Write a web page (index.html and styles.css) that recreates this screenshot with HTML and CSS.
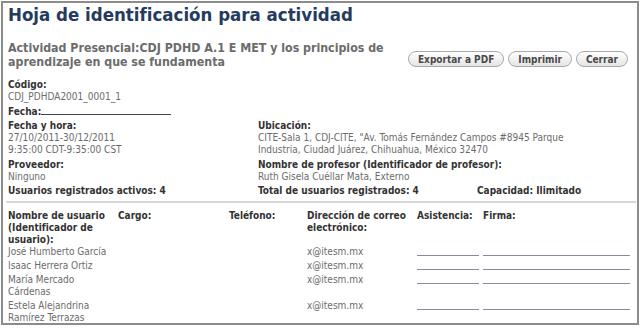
FILE: index.html
```html
<!DOCTYPE html>
<html lang="es">
<head>
<meta charset="utf-8">
<title>Hoja de identificación para actividad</title>
<link rel="stylesheet" href="styles.css">
</head>
<body>
<div class="frame">
  <h1 class="title">Hoja de identificación para actividad</h1>
  <div class="head">
    <div class="subtitle">Actividad Presencial:CDJ PDHD A.1 E MET y los principios de aprendizaje en que se fundamenta</div>
    <div class="buttons">
      <button class="btn">Exportar a PDF</button>
      <button class="btn">Imprimir</button>
      <button class="btn">Cerrar</button>
    </div>
  </div>
  <div class="info">
    <div class="field"><div class="lbl">Código:</div><div class="val">CDJ_PDHDA2001_0001_1</div></div>
    <div class="field"><div class="lbl">Fecha:<span class="blank"></span></div></div>
    <div class="pair">
      <div class="field"><div class="lbl">Fecha y hora:</div><div class="val">27/10/2011-30/12/2011<br>9:35:00 CDT-9:35:00 CST</div></div>
      <div class="field"><div class="lbl">Ubicación:</div><div class="val">CITE-Sala 1, CDJ-CITE, "Av. Tomás Fernández Campos #8945 Parque Industria, Ciudad Juárez, Chihuahua, México 32470</div></div>
    </div>
    <div class="pair">
      <div class="field"><div class="lbl">Proveedor:</div><div class="val">Ninguno</div></div>
      <div class="field"><div class="lbl">Nombre de profesor (Identificador de profesor):</div><div class="val">Ruth Gisela Cuéllar Mata, Externo</div></div>
    </div>
    <div class="counts">
      <div class="lbl">Usuarios registrados activos: 4</div>
      <div class="lbl">Total de usuarios registrados: 4</div>
      <div class="lbl">Capacidad: Ilimitado</div>
    </div>
  </div>
  <div class="sep"></div>
  <table class="users">
    <colgroup>
      <col class="c-name"><col class="c-cargo"><col class="c-tel"><col class="c-mail"><col class="c-asis"><col class="c-firma">
    </colgroup>
    <thead>
      <tr>
        <th>Nombre de usuario (Identificador de usuario):</th>
        <th>Cargo:</th>
        <th>Teléfono:</th>
        <th>Dirección de correo electrónico:</th>
        <th>Asistencia:</th>
        <th>Firma:</th>
      </tr>
    </thead>
    <tbody>
      <tr><td>José Humberto García</td><td></td><td></td><td>x@itesm.mx</td><td><span class="line short"></span></td><td><span class="line long"></span></td></tr>
      <tr><td>Isaac Herrera Ortiz</td><td></td><td></td><td>x@itesm.mx</td><td><span class="line short"></span></td><td><span class="line long"></span></td></tr>
      <tr><td>María Mercado Cárdenas</td><td></td><td></td><td>x@itesm.mx</td><td><span class="line short"></span></td><td><span class="line long"></span></td></tr>
      <tr><td>Estela Alejandrina Ramírez Terrazas</td><td></td><td></td><td>x@itesm.mx</td><td><span class="line short"></span></td><td><span class="line long"></span></td></tr>
    </tbody>
  </table>
</div>
</body>
</html>
```
FILE: styles.css
```css
html, body {
  margin: 0;
  padding: 0;
  background: #fff;
}
body {
  font-family: "DejaVu Sans Condensed", "DejaVu Sans", sans-serif;
  font-stretch: condensed;
  font-size: 10px;
  color: #666;
}
.frame {
  margin: 1px 1px 0 1px;
  width: 638px;
  height: 324px;
  border: 2px solid #8c8c8c;
  box-sizing: border-box;
  padding: 1px 5px 0 5px;
  overflow: hidden;
}
.title {
  margin: 0;
  font-size: 18.5px;
  font-weight: bold;
  color: #253a5e;
  line-height: 22px;
}
.head {
  display: flex;
  align-items: flex-end;
  justify-content: space-between;
  margin-top: 15px;
}
.subtitle {
  width: 395px;
  font-size: 12.3px;
  font-weight: bold;
  color: #6b6b6b;
  line-height: 14px;
}
.buttons {
  display: flex;
  gap: 4px;
  margin-bottom: 2px;
  margin-right: 4px;
}
.btn {
  font-family: "DejaVu Sans Condensed", "DejaVu Sans", sans-serif;
  font-stretch: condensed;
  font-size: 10px;
  font-weight: bold;
  color: #4a4a4a;
  white-space: nowrap;
  height: 16px;
  padding: 0 9px;
  border: 1px solid #a9a9a9;
  border-radius: 8px;
  background: linear-gradient(#ffffff, #e4e4e4);
  line-height: 13px;
}
.info {
  margin-top: 10px;
  line-height: 12px;
}
.field {
  margin-bottom: 2.5px;
}
.lbl {
  font-weight: bold;
  color: #333;
  white-space: nowrap;
}
.val {
  color: #6b6b6b;
}
.blank {
  display: inline-block;
  width: 130px;
  border-bottom: 1px solid #444;
  vertical-align: baseline;
}
.pair {
  display: grid;
  grid-template-columns: 250px 1fr;
}
.pair .val {
  max-width: 345px;
}
.counts {
  display: grid;
  grid-template-columns: 250px 219px 1fr;
}
.sep {
  margin: 4px 0 0 -2px;
  height: 2px;
  background: #d6d6d6;
  width: 630px;
}
.users {
  margin-top: 7px;
  border-collapse: collapse;
  table-layout: fixed;
  width: 622px;
}
.users th {
  text-align: left;
  vertical-align: top;
  font-weight: bold;
  color: #333;
  line-height: 12px;
  padding: 0;
}
.users td {
  vertical-align: top;
  line-height: 12px;
  padding: 0 0 2px 0;
  color: #6b6b6b;
}
.c-name { width: 110px; }
.c-cargo { width: 111px; }
.c-tel { width: 78px; }
.c-mail { width: 110px; }
.c-asis { width: 66px; }
.c-firma { width: 147px; }
.line {
  display: block;
  height: 1px;
  margin-top: 8.5px;
  background: #838ca4;
}
.line.short { width: 62px; }
.line.long { width: 147px; }
```
